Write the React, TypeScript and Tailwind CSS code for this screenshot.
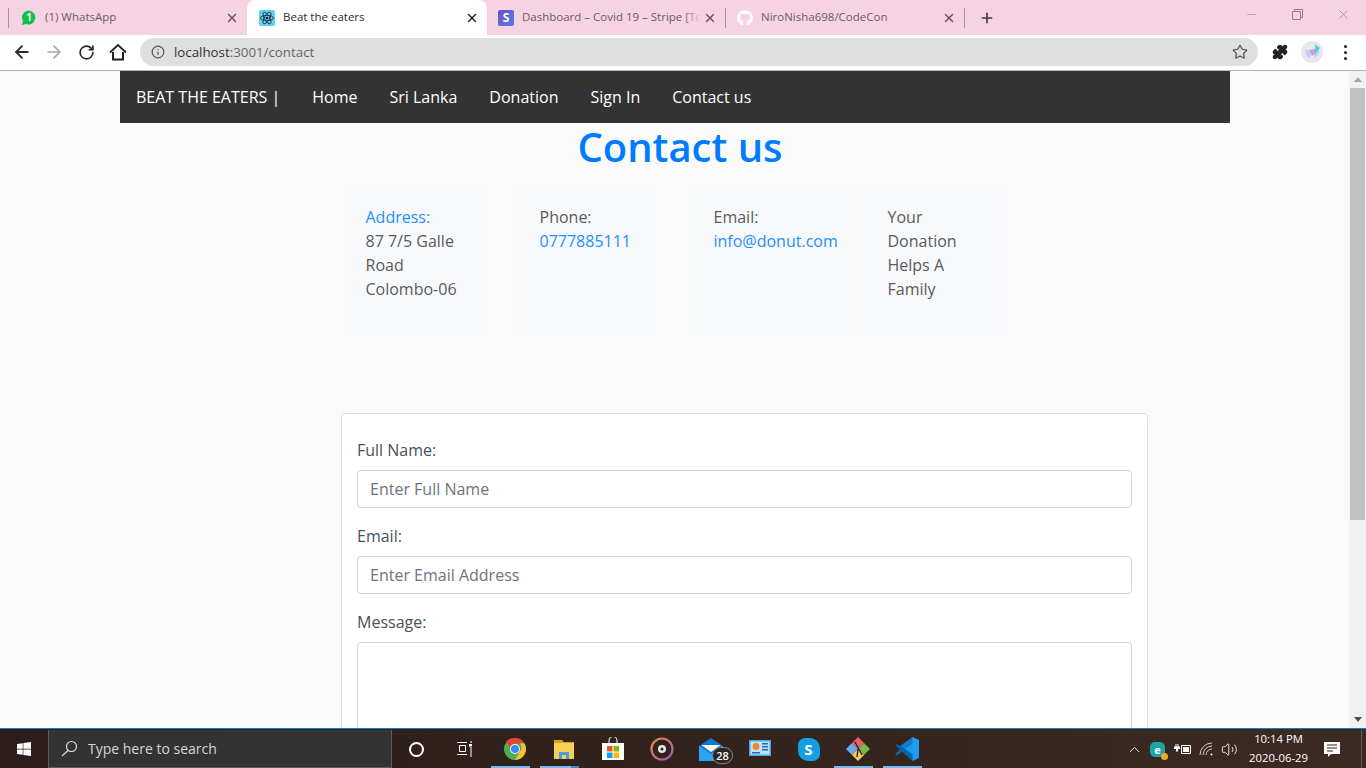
import React from "react";
import { X, Plus, Minus, ArrowLeft, ArrowRight, RotateCw, Info, Star, Puzzle, ChevronUp, Volume2 } from "lucide-react";
import { FaGithub, FaWindows } from "react-icons/fa";

const SANS = "font-['Open_Sans','Noto_Sans',sans-serif]";

const ReactIcon = () => (
  <svg width="16" height="16" viewBox="0 0 16 16">
    <rect width="16" height="16" rx="2" fill="#5ed3f3" />
    <g fill="none" stroke="#20232a" strokeWidth="0.8">
      <ellipse cx="8" cy="8" rx="6.6" ry="2.6" />
      <ellipse cx="8" cy="8" rx="6.6" ry="2.6" transform="rotate(60 8 8)" />
      <ellipse cx="8" cy="8" rx="6.6" ry="2.6" transform="rotate(120 8 8)" />
    </g>
    <circle cx="8" cy="8" r="1.3" fill="#20232a" />
  </svg>
);

const WhatsappBadge = () => (
  <svg width="16" height="16" viewBox="0 0 16 16">
    <path d="M8 .5a7 7 0 0 0-6 10.600L.8 15l4-1A7 7 0 1 0 8 .5z" fill="#0fc04a" />
    <text x="8" y="11" fontSize="10" fontWeight="700" fill="#fff" textAnchor="middle" fontFamily="Open Sans">1</text>
  </svg>
);

const StripeIcon = () => (
  <div className="flex h-4 w-4 items-center justify-center rounded-[2px] bg-[linear-gradient(135deg,#6a4fc9,#5b7be8)] text-[12px] font-bold leading-none text-white">
    S
  </div>
);

type TabProps = {
  icon: React.ReactNode;
  title: string;
  width: string;
  active?: boolean;
  divider?: boolean;
  fade?: boolean;
};

const Tab = ({ icon, title, width, active, divider, fade }: TabProps) => (
  <div
    className={`flex h-[35px] shrink-0 items-center ${width} ${
      active ? "rounded-t-[8px] bg-white text-[#2b2b2b]" : "text-[#6d5a66]"
    }`}
  >
    <div className={`flex w-[16px] shrink-0 justify-center ${divider ? "ml-[11px]" : "ml-[12px]"}`}>{icon}</div>
    <span className="ml-[8px] min-w-0 flex-1 overflow-hidden whitespace-nowrap pb-[2px] text-[11.5px] leading-[14px]">
      {title}
    </span>
    {fade && <div className="-ml-[18px] h-[20px] w-[18px] shrink-0 bg-[linear-gradient(90deg,#f5d3e300,#f5d3e3)]" />}
    <X size={14} strokeWidth={2.4} className={`ml-[2px] shrink-0 ${active ? "text-[#222]" : "text-[#5f5360]"}`} />
    <div className={`flex shrink-0 justify-end ${divider ? "w-[9px]" : "w-[8px]"}`}>
      {divider && <div className="h-[20px] w-px bg-[#a8929f]" />}
    </div>
  </div>
);

const TabStrip = () => (
  <div className={`flex h-[35px] shrink-0 items-center bg-[#f5d3e3] pl-[8px] ${SANS}`}>
    <div className="h-[20px] w-px shrink-0 bg-[#a8929f]" />
    <Tab icon={<WhatsappBadge />} title="(1) WhatsApp" width="w-[238px]" />
    <Tab icon={<ReactIcon />} title="Beat the eaters" width="w-[240px]" active />
    <Tab icon={<StripeIcon />} title="Dashboard – Covid 19 – Stripe [Test]" width="w-[239px]" divider fade />
    <Tab icon={<FaGithub size={16} className="text-white" />} title="NiroNisha698/CodeCon" width="w-[239px]" divider />
    <Plus size={16} strokeWidth={2.4} className="ml-[14px] text-[#3a3a3a]" />
    <div className="ml-auto flex h-full items-start text-[#94808c]">
      <div className="flex h-[28px] w-[46px] items-center justify-center">
        <Minus size={13} strokeWidth={1.2} />
      </div>
      <div className="flex h-[28px] w-[46px] items-center justify-center">
        <svg width="11" height="11" viewBox="0 0 11 11" fill="none" stroke="currentColor">
          <path d="M.5 2.500h8v8h-8zM2.500 2.500v-2h8v8h-2" />
        </svg>
      </div>
      <div className="flex h-[28px] w-[46px] items-center justify-center">
        <X size={15} strokeWidth={1.1} />
      </div>
    </div>
  </div>
);

const HomeIcon = () => (
  <svg width="18" height="18" viewBox="0 0 18 18" fill="none" stroke="#222" strokeWidth="2" className="ml-[14px]">
    <path d="M4 9v7.500h10V9" />
    <path d="M1 9.500L9 2l8 7.500" strokeWidth="1.800" />
  </svg>
);

const Toolbar = () => (
  <div className={`flex h-[36px] shrink-0 items-center border-b border-[#b5b5b5] bg-white pb-px ${SANS}`}>
    <div className="flex w-[140px] items-center pl-[12px] text-[#2b2b2b]">
      <ArrowLeft size={20} strokeWidth={2.2} />
      <ArrowRight size={20} strokeWidth={2} className="ml-[12px] text-[#a6a6a6]" />
      <RotateCw size={17} strokeWidth={2.4} className="ml-[14px]" />
      <HomeIcon />
    </div>
    <div className="flex h-[28px] w-[1118px] items-center rounded-full bg-[#dfdfdf] pl-[11px] pr-[10px]">
      <Info size={14} strokeWidth={2} className="text-[#555]" />
      <span className="ml-[9px] pt-[2px] text-[13.3px] leading-none text-[#333]">
        localhost<span className="text-[#666]">:3001/contact</span>
      </span>
      <Star size={16} strokeWidth={2} className="ml-auto text-[#5f5f5f]" />
    </div>
    <Puzzle size={16} className="ml-[14px] fill-[#222] text-[#222]" />
    <svg width="22" height="22" viewBox="0 0 22 22" className="ml-[13px]">
      <circle cx="11" cy="11" r="11" fill="#e9e6ee" />
      <path d="M4 8l6 3-1 7-4-4zM18 6l-6 5 2 6 4-5z" fill="#bcd0ef" />
      <path d="M8 9l6-1 1 4-4 3z" fill="#c39fdc" />
      <path d="M14 3l5 4-5 6z" fill="#3fc5d6" opacity="0.8" />
    </svg>
    <div className="ml-[21px] flex flex-col gap-[3px]">
      <div className="h-[3px] w-[3px] rounded-full bg-[#222]" />
      <div className="h-[3px] w-[3px] rounded-full bg-[#222]" />
      <div className="h-[3px] w-[3px] rounded-full bg-[#222]" />
    </div>
  </div>
);

const NAV = ["Home", "Sri Lanka", "Donation", "Sign In", "Contact us"];

const Navbar = () => (
  <nav className="flex h-[52px] w-[1110px] items-center bg-[#333] pl-[16px] text-[16px] text-white">
    <span className="mr-[16px]">BEAT THE EATERS |</span>
    {NAV.map(item => (
      <a key={item} className="px-[16px]">
        {item}
      </a>
    ))}
  </nav>
);

const InfoCard = ({ children, className }: { children: React.ReactNode; className: string }) => (
  <div className={`h-[160px] shrink-0 bg-[#f8f9fa] pl-[24.5px] pt-[25px] text-[16px] leading-[24px] text-[#5a5a5a] ${className}`}>
    {children}
  </div>
);

const Field = ({ label, placeholder }: { label: string; placeholder: string }) => (
  <div className="mb-[16px]">
    <label className="mb-[8px] block text-[16px] leading-[24px] text-[#495057]">{label}</label>
    <input
      placeholder={placeholder}
      className="block h-[38px] w-full rounded-[4px] border border-[#ced4da] bg-white px-[12px] text-[16px] outline-none placeholder:text-[#6c757d]"
    />
  </div>
);

const Page = () => (
  <main className={`min-w-0 flex-1 overflow-hidden bg-[#fafafa] ${SANS}`}>
    <div className="ml-[120px]">
      <Navbar />
      <h1 className="w-[1120px] text-center text-[40px] font-semibold leading-[48px] text-[#007bff]">Contact us</h1>
      <div className="ml-[221px] mt-[9px] flex">
        <InfoCard className="mr-[30px] w-[144px]">
          <span className="text-[#1e90ff]">Address:</span>
          <br />
          87 7/5 Galle
          <br />
          Road
          <br />
          Colombo-06
        </InfoCard>
        <InfoCard className="mr-[30px] w-[144px]">
          Phone:
          <br />
          <a className="text-[#1e90ff]">0777885111</a>
        </InfoCard>
        <InfoCard className="mr-[2px] w-[172px]">
          Email:
          <br />
          <a className="whitespace-nowrap text-[#1e90ff]">info@donut.com</a>
        </InfoCard>
        <InfoCard className="w-[144px]">
          <div className="w-[90px]">Your Donation Helps A Family</div>
        </InfoCard>
      </div>
      <div className="ml-[221px] mt-[73px] h-[400px] w-[807px] rounded-[4px] border border-[#dfdfdf] bg-white px-[15px] pt-[24px]">
        <Field label="Full Name:" placeholder="Enter Full Name" />
        <Field label="Email:" placeholder="Enter Email Address" />
        <label className="mb-[8px] block text-[16px] leading-[24px] text-[#495057]">Message:</label>
        <textarea className="block h-[150px] w-full resize-none rounded-[4px] border border-[#ced4da] bg-white outline-none" />
      </div>
    </div>
  </main>
);

const Scrollbar = () => (
  <div className="flex w-[17px] shrink-0 flex-col items-center bg-[#f1f1f1]">
    <div className="mt-[6px] h-0 w-0 border-x-[4px] border-b-[5px] border-x-transparent border-b-[#a3a3a3]" />
    <div className="mt-[6px] h-[432px] w-[15px] bg-[#c1c1c1]" />
    <div className="mb-[6px] mt-auto h-0 w-0 border-x-[4px] border-t-[5px] border-x-transparent border-t-[#505050]" />
  </div>
);

const Chrome = () => (
  <svg width="32" height="32" viewBox="0 0 32 32">
    <circle cx="16" cy="16" r="11" fill="#4caf50" />
    <path d="M16 5a11 11 0 0 1 9.500 5.500H16a5.500 5.500 0 0 0-5.200 3.700L6.700 9A11 11 0 0 1 16 5z" fill="#ea4335" />
    <path d="M25.500 10.500A11 11 0 0 1 16 27l4.700-8.200a5.500 5.500 0 0 0 0-8.300z" fill="#fbc02d" />
    <circle cx="16" cy="16" r="5" fill="#fff" />
    <circle cx="16" cy="16" r="4" fill="#4285f4" />
  </svg>
);

const Explorer = () => (
  <svg width="24" height="24" viewBox="0 0 24 24">
    <path d="M2 3h8l2 2h10v17H2z" fill="#d9a21b" />
    <rect x="2" y="6" width="20" height="16" fill="#f6cf5b" />
    <rect x="7" y="15" width="10" height="7" fill="#4a9fe0" />
    <rect x="10" y="18" width="4" height="4" fill="#f6cf5b" />
  </svg>
);

const Store = () => (
  <svg width="24" height="24" viewBox="0 0 24 24">
    <path d="M8 6V3.500a4 4 0 0 1 8 0V6" fill="none" stroke="#ddd" strokeWidth="1.200" />
    <path d="M1 6h22v17H1z" fill="#fff" />
    <rect x="6" y="9" width="5.500" height="5.500" fill="#f25022" />
    <rect x="12.500" y="9" width="5.500" height="5.500" fill="#7fba00" />
    <rect x="6" y="15.500" width="5.500" height="5.500" fill="#00a4ef" />
    <rect x="12.500" y="15.500" width="5.500" height="5.500" fill="#ffb900" />
  </svg>
);

const Groove = () => (
  <svg width="26" height="26" viewBox="0 0 26 26">
    <defs>
      <linearGradient id="groove" x1="0" y1="0" x2="1" y2="1">
        <stop offset="0" stopColor="#f0883a" />
        <stop offset="1" stopColor="#9a59c5" />
      </linearGradient>
    </defs>
    <circle cx="13" cy="13" r="10.500" fill="none" stroke="url(#groove)" strokeWidth="2.200" />
    <circle cx="13" cy="13" r="4" fill="#e9e6e2" />
    <circle cx="13" cy="13" r="1.500" fill="#2a2320" />
  </svg>
);

const Mail = () => (
  <svg width="24" height="23" viewBox="0 0 24 23">
    <path d="M0 8L12 0l12 8v15H0z" fill="#0f78d4" />
    <path d="M2.500 7h19L12 14z" fill="#fff" />
    <path d="M0 8l12 8 12-8v15H0z" fill="#2ba3ee" />
  </svg>
);

const Panel = () => (
  <svg width="22" height="18" viewBox="0 0 22 18">
    <rect width="22" height="16" fill="#49a9e8" />
    <rect x="1.500" y="1.500" width="19" height="13" fill="#bfe2f8" />
    <circle cx="7" cy="6.500" r="3.400" fill="#f08a24" />
    <rect x="13" y="3" width="6" height="1.500" fill="#1f6fb2" />
    <rect x="13" y="6" width="6" height="1.500" fill="#1f6fb2" />
    <rect x="13" y="9" width="6" height="1.500" fill="#1f6fb2" />
    <rect x="3" y="12" width="8" height="1.500" fill="#1f6fb2" />
  </svg>
);

const GitGui = () => (
  <svg width="26" height="26" viewBox="0 0 26 26">
    <path d="M13 1l6 6-6 6-6-6z" fill="#e8616a" />
    <path d="M7 7l6 6-6 6-6-6z" fill="#6ea8e8" />
    <path d="M19 7l6 6-6 6-6-6z" fill="#74b84a" />
    <path d="M13 13l6 6-6 6-6-6z" fill="#f3cf57" />
    <path d="M10 6l7 13M13 13l-1 8" stroke="#2b2320" strokeWidth="1.400" fill="none" />
  </svg>
);

const VsCode = () => (
  <svg width="26" height="26" viewBox="0 0 26 26">
    <path d="M18.500 1L25 4v18l-6.500 3L8 14.500z" fill="#1f9cf0" />
    <path d="M18.500 1v7L8 14.500 4 11.500z" fill="#0f7ec4" />
    <path d="M1 9l2-1 15.500 10v7L8 15.500 3 19.500l-2-1 4.500-5.500z" fill="#0065a9" />
  </svg>
);

const SkypeIcon = () => (
  <div className="flex h-[23px] w-[22px] items-center justify-center rounded-[10px] rounded-br-[7px] rounded-tl-[7px] bg-[#12a0e4] text-[15px] font-bold leading-none text-white">
    S
  </div>
);

const TaskIcon = ({ children, active, split }: { children: React.ReactNode; active?: boolean; split?: boolean }) => (
  <div className="relative flex h-[38px] w-[49px] shrink-0 items-center justify-center">
    {children}
    {active && (
      <div className="absolute bottom-0 left-[1px] flex h-[2px] w-[39px]">
        <div className="flex-1 bg-[#76b9ed]" />
        {split && <div className="w-[8px] bg-[#4f88b5]" />}
      </div>
    )}
  </div>
);

const Taskbar = () => (
  <footer className="flex h-[40px] shrink-0 items-start border-t border-[#0f7fd0] bg-[linear-gradient(90deg,#2a1d1a,#33231d_55%,#3c2a22)] pt-px font-['Open_Sans',sans-serif] text-white">
    <div className="flex h-[38px] w-[48px] shrink-0 items-center justify-center">
      <FaWindows size={16} />
    </div>
    <div className="flex h-[38px] w-[344px] shrink-0 items-center border border-t-0 border-[#5c5c5c] bg-[#333] pl-[12px]">
      <svg width="17" height="17" viewBox="0 0 17 17" fill="none" stroke="#e6e6e6" strokeWidth="1.100">
        <circle cx="10.500" cy="6.500" r="5" />
        <path d="M7 10.500L1 16" />
      </svg>
      <span className="ml-[10px] text-[14px] text-[#d6d6d6]">Type here to search</span>
    </div>
    <div className="flex h-[38px] w-[48px] shrink-0 items-center justify-center">
      <div className="h-[15px] w-[15px] rounded-full border-2 border-white" />
    </div>
    <div className="flex h-[38px] w-[49px] shrink-0 items-center justify-center">
      <svg width="16" height="16" viewBox="0 0 16 16" fill="none" stroke="#fff">
        <path d="M0 1.500h10M2.500 4.500h6v6h-6zM0 13.500h10M14 0v2M14 6v10" />
        <rect x="12" y="3" width="3" height="2.500" fill="#fff" stroke="none" />
      </svg>
    </div>
    <div className="ml-[1px] flex">
      <TaskIcon active><Chrome /></TaskIcon>
      <TaskIcon active split><Explorer /></TaskIcon>
      <TaskIcon><Store /></TaskIcon>
      <TaskIcon><Groove /></TaskIcon>
      <TaskIcon>
        <Mail />
        <div className="absolute left-[26px] top-[17px] flex h-[17px] w-[21px] items-center justify-center rounded-full border border-[#888] bg-[#2d2523] text-[11px] font-semibold leading-none">
          28
        </div>
      </TaskIcon>
      <TaskIcon><Panel /></TaskIcon>
      <TaskIcon><SkypeIcon /></TaskIcon>
      <TaskIcon active><GitGui /></TaskIcon>
      <TaskIcon active><VsCode /></TaskIcon>
    </div>
    <div className="ml-auto flex h-[38px] items-center">
      <ChevronUp size={17} strokeWidth={1.300} className="text-white" />
      <div className="relative ml-[7px] flex h-[15px] w-[15px] items-center justify-center rounded-[5px] bg-[#1ea5a8] text-[11px] font-bold leading-none">
        e
        <div className="absolute -bottom-[3px] -right-[3px] h-[7px] w-[7px] rounded-full bg-[#f0a82a]" />
      </div>
      <svg width="17" height="11" viewBox="0 0 17 11" className="ml-[9px]" fill="#fff">
        <path d="M0 2.500h1.500V0h1v2.500h1V0h1v2.500H6v2.600H4v2.400H2V5.100H0z" />
        <path d="M7.500 1.500h9v8h-9z" fill="none" stroke="#fff" />
        <rect x="9" y="3" width="6" height="5" />
      </svg>
      <svg width="16" height="14" viewBox="0 0 16 14" fill="none" stroke="#cfcfcf" className="ml-[8px]">
        <path d="M1 13a12 12 0 0 1 12-12M4 13a9 9 0 0 1 9-9M7 13a6 6 0 0 1 6-6" />
        <circle cx="12.500" cy="12.500" r="1" fill="#fff" stroke="none" />
      </svg>
      <Volume2 size={17} strokeWidth={1.200} className="ml-[6px] text-white" />
      <div className="flex w-[81px] flex-col items-center pb-[3px] text-[11.3px] leading-[19px] text-white">
        <span>10:14 PM</span>
        <span>2020-06-29</span>
      </div>
      <div className="ml-px flex w-[24px] justify-center">
        <svg width="16" height="15" viewBox="0 0 16 15">
          <path d="M0 0h16v12H7l-3 3v-3H0z" fill="#fff" />
          <path d="M3 3h10M3 6h10M3 9h6" stroke="#33231d" />
        </svg>
      </div>
      <div className="ml-[17px] h-[38px] w-[5px] border-l border-[#6b5a52]" />
    </div>
  </footer>
);

export default function App() {
  return (
    <div className="flex h-screen w-screen flex-col overflow-hidden bg-white">
      <TabStrip />
      <Toolbar />
      <div className="flex min-h-0 flex-1">
        <Page />
        <Scrollbar />
      </div>
      <Taskbar />
    </div>
  );
}
